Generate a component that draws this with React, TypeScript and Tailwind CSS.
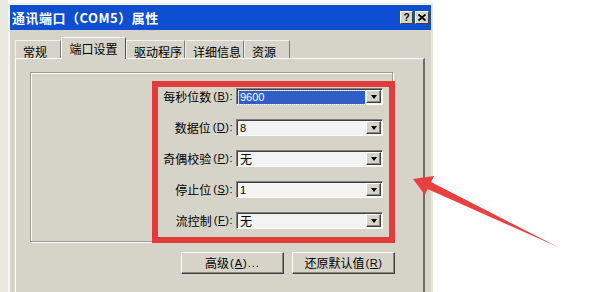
import React from "react";

const rows = [
  { label: "每秒位数", key: "B", value: "9600", selected: true },
  { label: "数据位", key: "D", value: "8" },
  { label: "奇偶校验", key: "P", value: "无" },
  { label: "停止位", key: "S", value: "1" },
  { label: "流控制", key: "F", value: "无" },
];

const tabs = ["常规", "端口设置", "驱动程序", "详细信息", "资源"];

const DropButton = () => (
  <div className="w-[15px] h-full flex items-center justify-center bg-[#d6d3c8] border-t border-l border-t-white border-l-white border-b border-r border-b-[#404040] border-r-[#404040] shadow-[inset_-1px_-1px_0_#8a8880]">
    <div className="w-0 h-0 border-x-[3px] border-x-transparent border-t-[4px] border-t-black" />
  </div>
);

const Combo = ({ value, selected }: { value: string; selected?: boolean }) => {
  const isCjk = /[\u4e00-\u9fff]/.test(value);
  return (
    <div className="w-[147px] h-[17px] flex bg-[#f3f3f3] border-t border-l border-t-[#808080] border-l-[#808080] border-b border-r border-b-white border-r-white shadow-[inset_1px_1px_0_#404040]">
      <div className="flex-1 flex items-center pl-[2px] pt-[1px] pr-[1px]">
        {selected ? (
          <div className="w-full h-[13px] flex items-center bg-[#2f5fc6] text-white outline-1 outline-dotted outline-[#c9d4ec] font-['Liberation_Sans',sans-serif] text-[11px] pl-[1px]">
            {value}
          </div>
        ) : (
          <span className={isCjk ? "text-[12px] pl-[1px]" : "font-['Liberation_Sans',sans-serif] text-[11px] pl-[1px]"}>
            {value}
          </span>
        )}
      </div>
      <div className="py-[1px] pr-[1px] h-full">
        <DropButton />
      </div>
    </div>
  );
};

const Label = ({ text, k }: { text: string; k: string }) => (
  <div className="w-[78px] pr-[3px] flex justify-end items-center whitespace-nowrap text-[12px] leading-none">
    <span>{text}</span>
    <span className="ml-[2px] text-[11px] font-['Liberation_Sans',sans-serif] tracking-[0.5px]">
      (<span className="underline">{k}</span>):
    </span>
  </div>
);

const RaisedButton = ({ children }: { children: React.ReactNode }) => (
  <div className="w-[103px] h-[22px] flex items-center justify-center bg-[#d6d3c8] border-t border-l border-t-white border-l-white border-b border-r border-b-[#404040] border-r-[#404040] shadow-[inset_-1px_-1px_0_#8a8880] text-[12px]">
    {children}
  </div>
);

export default function App() {
  return (
    <div className="relative w-[613px] h-[292px] bg-white overflow-hidden text-black font-['Noto_Sans_CJK_SC','Noto_Sans',sans-serif]">
      <div className="flex h-full">
        <div className="w-[8px] h-full bg-[#e8e7e1]" />
        <div className="pt-[3px] h-full">
          {/* window */}
          <div className="w-[425px] h-[289px] flex flex-col bg-[#d6d3c8] border-t-2 border-l-2 border-r-2 border-t-[#f2f1ec] border-l-[#f7f6f2] border-r-[#e6e5de]">
            {/* title bar */}
            <div className="h-[25px] bg-[#0d4fd0] flex items-center justify-between pl-[2px] pr-[2px]">
              <span className="text-white font-bold text-[13px] tracking-[0.5px]">通讯端口（COM5）属性</span>
              <div className="flex gap-[2px]">
                <div className="w-[13px] h-[13px] flex items-center justify-center bg-[#d6d3c8] border-t border-l border-t-white border-l-white border-b border-r border-b-[#404040] border-r-[#404040] text-[10px] font-bold font-['Liberation_Sans',sans-serif] leading-none">
                  ?
                </div>
                <div className="w-[14px] h-[13px] flex items-center justify-center bg-[#d6d3c8] border-t border-l border-t-white border-l-white border-b border-r border-b-[#404040] border-r-[#404040]">
                  <svg width="8" height="7" viewBox="0 0 8 7">
                    <path d="M0.5 0.5 L7.5 6.5 M7.5 0.5 L0.5 6.5" stroke="black" strokeWidth="1.8" />
                  </svg>
                </div>
              </div>
            </div>

            {/* body */}
            <div className="flex-1 flex flex-col pl-[5px] pt-[7px]">
              {/* tabs */}
              <div className="flex items-end h-[21px] relative z-10">
                {tabs.map((t, i) => {
                  const active = i === 1;
                  const widths = ["w-[46px]", "w-[65px]", "w-[59px]", "w-[59px]", "w-[46px]"];
                  return active ? (
                    <div
                      key={t}
                      className={`${widths[i]} h-[22px] -mb-[1px] flex items-start justify-center pt-[2px] bg-[#d6d3c8] border-t border-l border-t-white border-l-white border-r border-r-[#55534d] text-[12px]`}
                    >
                      {t}
                    </div>
                  ) : (
                    <div
                      key={t}
                      className={`${widths[i]} h-[18px] flex items-start pt-[2px] pl-[7px] border-t border-l border-t-[#f2f1ec] border-l-[#f2f1ec] border-r border-r-[#7b7972] text-[12px]`}
                    >
                      {t}
                    </div>
                  );
                })}
              </div>

              {/* tab panel */}
              <div className="w-[410px] flex-1 flex flex-col pl-[14px] pt-[13px] border-t border-l border-t-white border-l-white border-r-2 border-r-[#6e6c65]">
                {/* group box */}
                <div className="w-[363px] h-[170px] flex justify-end items-start border border-[#9c9a92] shadow-[inset_1px_1px_0_#fff,1px_1px_0_#fff]">
                  <div className="w-[243px] h-[162px] mt-[8px] -mr-[3px] border-[6px] border-[#e13b3c] flex flex-col gap-[14px] pt-[1px]">
                    {rows.map((r) => (
                      <div key={r.key} className="h-[17px] flex items-center">
                        <Label text={r.label} k={r.key} />
                        <Combo value={r.value} selected={r.selected} />
                      </div>
                    ))}
                  </div>
                </div>

                {/* buttons */}
                <div className="w-[365px] flex justify-end gap-[8px] mt-[10px]">
                  <RaisedButton>
                    高级<span className="ml-[1px] font-['Liberation_Sans',sans-serif] text-[11px] tracking-[1px]">(<span className="underline">A</span>)...</span>
                  </RaisedButton>
                  <RaisedButton>
                    还原默认值<span className="ml-[1px] font-['Liberation_Sans',sans-serif] text-[11px] tracking-[0.5px]">(<span className="underline">R</span>)</span>
                  </RaisedButton>
                </div>
              </div>
            </div>
          </div>
        </div>
      </div>

      {/* annotation arrow */}
      <svg className="absolute left-0 top-0 pointer-events-none" width="613" height="292" viewBox="0 0 613 292">
        <polygon points="413,179 434,176 431,182 558,247 427.5,189 425,195" fill="#e8403f" />
      </svg>
    </div>
  );
}
